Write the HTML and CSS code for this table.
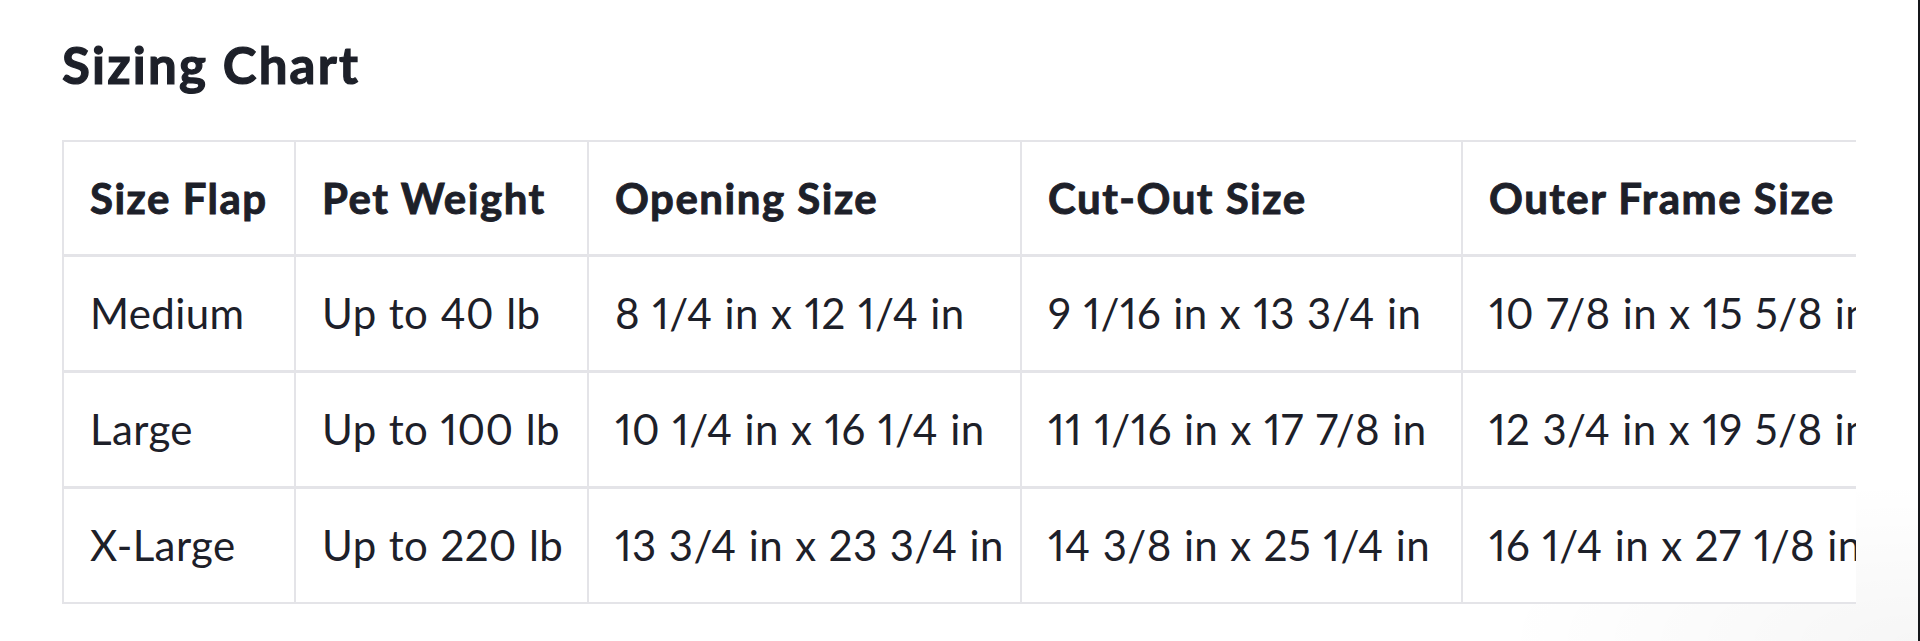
FILE: index.html
```html
<!DOCTYPE html>
<html lang="en">
<head>
<meta charset="utf-8">
<title>Sizing Chart</title>
<link rel="stylesheet" href="styles.css">
</head>
<body>
<div class="page">
  <section class="sizing">
    <h2 class="sizing-title">Sizing Chart</h2>
    <div class="table-wrap">
      <table class="chart">
        <colgroup>
          <col class="col-size">
          <col class="col-weight">
          <col class="col-opening">
          <col class="col-cutout">
          <col class="col-frame">
        </colgroup>
        <thead>
          <tr>
            <th>Size Flap</th>
            <th>Pet Weight</th>
            <th>Opening Size</th>
            <th>Cut-Out Size</th>
            <th>Outer Frame Size</th>
          </tr>
        </thead>
        <tbody>
          <tr>
            <td>Medium</td>
            <td>Up to 40 lb</td>
            <td>8 1/4 in x 12 1/4 in</td>
            <td>9 1/16 in x 13 3/4 in</td>
            <td>10 7/8 in x 15 5/8 in</td>
          </tr>
          <tr>
            <td>Large</td>
            <td>Up to 100 lb</td>
            <td>10 1/4 in x 16 1/4 in</td>
            <td>11 1/16 in x 17 7/8 in</td>
            <td>12 3/4 in x 19 5/8 in</td>
          </tr>
          <tr>
            <td>X-Large</td>
            <td>Up to 220 lb</td>
            <td>13 3/4 in x 23 3/4 in</td>
            <td>14 3/8 in x 25 1/4 in</td>
            <td>16 1/4 in x 27 1/8 in</td>
          </tr>
        </tbody>
      </table>
    </div>
  </section>
</div>
</body>
</html>
```
FILE: styles.css
```css
* { box-sizing: border-box; }

html, body {
  margin: 0;
  padding: 0;
  background: #ffffff;
}

body {
  font-family: "Lato", "Liberation Sans", sans-serif;
  color: #1d2029;
}

.page {
  width: 1920px;
  height: 641px;
  border-right: 2px solid #15161a;
  background: radial-gradient(ellipse 420px 160px at 100% 100%, rgba(0, 0, 0, 0.035), rgba(0, 0, 0, 0) 100%);
  overflow: hidden;
}

.sizing {
  padding: 35px 0 0 62px;
}

.sizing-title {
  margin: 0 0 45px 0;
  font-size: 51px;
  line-height: 60px;
  font-weight: 700;
  letter-spacing: 2.2px;
  -webkit-text-stroke: 1.2px #1d2029;
  color: #1d2029;
}

.table-wrap {
  width: 1794px;
  overflow: hidden;
}

.chart {
  border-collapse: collapse;
  table-layout: fixed;
  width: 1846px;
  white-space: nowrap;
  background: #ffffff;
  font-variant-numeric: proportional-nums;
}

.col-size { width: 232px; }
.col-weight { width: 293px; }
.col-opening { width: 433px; }
.col-cutout { width: 441px; }
.col-frame { width: 447px; }

.chart th,
.chart td {
  border: 2px solid #e4e4e8;
  padding: 26px 26px;
  text-align: left;
  font-size: 42px;
  overflow: visible;
}

.chart th {
  font-weight: 700;
  line-height: 60px;
  letter-spacing: 1.5px;
  -webkit-text-stroke: 0.9px #1d2029;
}

.chart td {
  font-weight: 400;
  line-height: 61px;
  letter-spacing: 0.4px;
  word-spacing: 1px;
  border-top-width: 3px;
}
```
